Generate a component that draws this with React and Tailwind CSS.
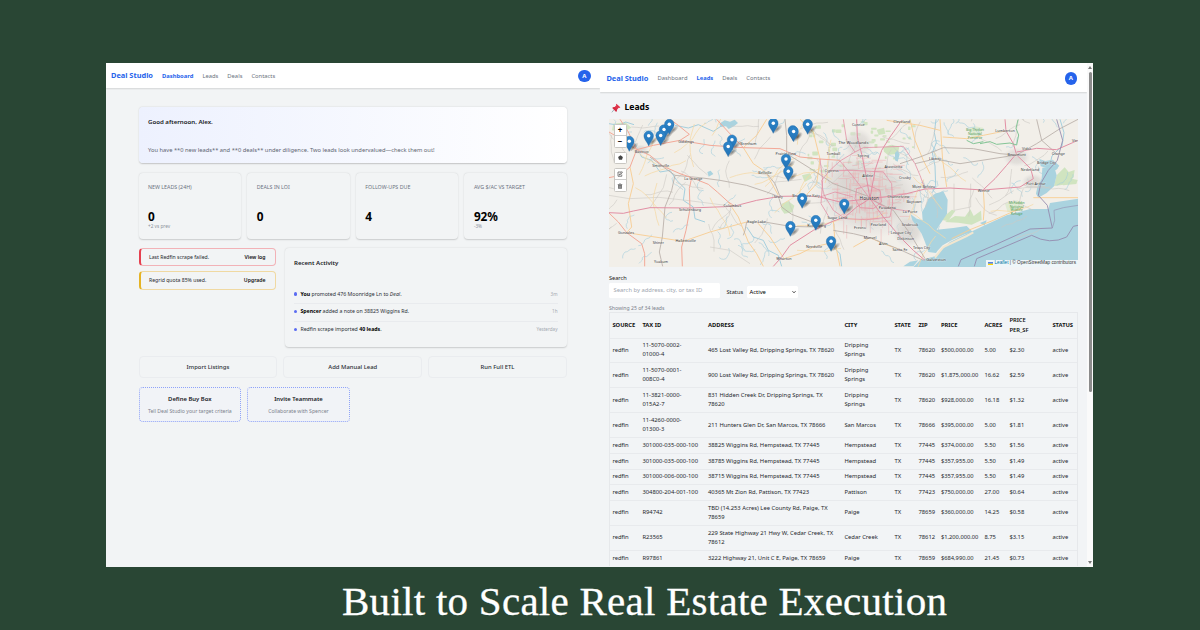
import React from 'react';

/* ---------- shared header ---------- */

function Header({ active, tall }) {
  const links = ['Dashboard', 'Leads', 'Deals', 'Contacts'];
  return (
    <header
      className={
        tall
          ? 'flex h-[28.5px] shrink-0 items-center bg-white pl-[6.4px] pr-[10px] pt-[2px] shadow-[0_1px_1.5px_rgba(0,0,0,0.13)]'
          : 'flex h-[25px] shrink-0 items-center bg-white pl-[5px] pr-[9.5px] pt-[1px] shadow-[0_1px_1.5px_rgba(0,0,0,0.13)]'
      }
    >
      <span className="w-[51px] text-[7.4px] font-bold text-[#2563eb]">Deal Studio</span>
      <nav className="flex gap-[9px] text-[5.82px] text-[#6b7280]">
        {links.map((l) => (
          <span key={l} className={l === active ? 'font-bold text-[#2563eb]' : ''}>
            {l}
          </span>
        ))}
      </nav>
      <span className="ml-auto flex size-[12.5px] items-center justify-center rounded-full bg-[#2563eb] text-[6px] font-bold text-white">
        A
      </span>
    </header>
  );
}

/* ---------- dashboard ---------- */

const stats = [
  ['NEW LEADS (24H)', '0', '+2 vs prev'],
  ['DEALS IN LOI', '0', ''],
  ['FOLLOW-UPS DUE', '4', ''],
  ['AVG $/AC VS TARGET', '92%', '-3%'],
];

function Alert({ text, action, className }) {
  return (
    <div
      className={`flex h-[18.5px] items-center justify-between rounded-[4px] border border-l-2 pl-[8.5px] pr-[9px] pt-[1px] text-[5.15px] text-[#26292e] ${className}`}
    >
      <span>{text}</span>
      <span className="font-semibold text-[#111]">{action}</span>
    </div>
  );
}

function Activity({ children, time, last }) {
  return (
    <li
      className={`flex h-[17.4px] items-center justify-between text-[5.22px] text-[#2b2f36] ${last ? '' : 'border-b border-[#e9ebee]'}`}
    >
      <span className="flex items-center gap-[3px]">
        <i className="mb-[2px] size-[3.4px] rounded-full bg-[#5b6cf2]" />
        <span>{children}</span>
      </span>
      <span className="mb-[2px] text-[4.6px] text-[#a3a8b0]">{time}</span>
    </li>
  );
}

function Dashboard() {
  return (
    <section className="flex w-[494px] flex-col bg-[#f2f4f5]">
      <Header active="Dashboard" />
      <main className="flex flex-col pl-[32.5px] pr-[33px] pt-[19.3px]">
        <div className="flex h-[56px] flex-col justify-between rounded-[4px] bg-gradient-to-r from-[#edf1fe] to-white px-[9.5px] pb-[8.5px] pt-[10px] shadow-[0_0.5px_1.5px_rgba(0,0,0,0.2)]">
          <h1 className="text-[6.1px] leading-[9px] font-semibold text-[#16181d]">Good afternoon, Alex.</h1>
          <p className="text-[5.75px] leading-[9px] text-[#5d6470]">
            You have **0 new leads** and **0 deals** under diligence. Two leads look undervalued—check them out!
          </p>
        </div>

        <div className="mt-[9.5px] grid grid-cols-4 gap-[6px]">
          {stats.map(([label, value, delta]) => (
            <div
              key={label}
              className="flex h-[66px] flex-col rounded-[4px] px-[9.5px] pt-[9.8px] shadow-[0_0.5px_1.5px_rgba(0,0,0,0.17)] bg-[#f2f4f5]"
            >
              <span className="text-[5.3px] leading-[8px] text-[#6b7280]">{label}</span>
              <span className="mt-[18.6px] text-[11.8px] leading-[14px] font-bold text-black">{value}</span>
              <span className="text-[4.7px] leading-[6px] text-[#8b919b]">{delta}</span>
            </div>
          ))}
        </div>

        <div className="mt-[9px] flex gap-[9px]">
          <div className="flex w-[137px] flex-col gap-[5px]">
            <Alert
              text="Last Redfin scrape failed."
              action="View log"
              className="border-[#f2b2b7] border-l-[#e5404f]"
            />
            <Alert
              text="Regrid quota 85% used."
              action="Upgrade"
              className="border-[#f0d9a2] border-l-[#e5b325]"
            />
          </div>
          <div className="flex h-[99px] flex-1 flex-col rounded-[4px] px-[9.5px] pt-[10px] shadow-[0_0.5px_1.5px_rgba(0,0,0,0.17)]">
            <h2 className="text-[6.1px] leading-[9px] font-semibold text-[#16181d]">Recent Activity</h2>
            <ul className="mt-[20px]">
              <Activity time="3m">
                <b className="text-black">You</b> promoted 476 Moonridge Ln to <i>Deal</i>.
              </Activity>
              <Activity time="1h">
                <b className="text-black">Spencer</b> added a note on 38825 Wiggins Rd.
              </Activity>
              <Activity time="Yesterday" last>
                Redfin scrape imported <b className="text-black">40 leads</b>.
              </Activity>
            </ul>
          </div>
        </div>

        <div className="mt-[9px] grid grid-cols-3 gap-[6px]">
          {['Import Listings', 'Add Manual Lead', 'Run Full ETL'].map((t) => (
            <div
              key={t}
              className="flex h-[22.5px] items-center justify-center rounded-[4px] border border-[#eaecef] pt-[1px] text-[5.9px] font-medium text-[#2b2f36]"
            >
              {t}
            </div>
          ))}
        </div>

        <div className="mt-[9px] grid grid-cols-4 gap-[6px]">
          {[
            ['Define Buy Box', 'Tell Deal Studio your target criteria'],
            ['Invite Teammate', 'Collaborate with Spencer'],
          ].map(([a, b]) => (
            <div
              key={a}
              className="flex h-[34.5px] flex-col items-center justify-center gap-[3px] rounded-[4px] border border-dotted border-[#8fa3f8] bg-[#f1f3f7] pt-[1px] whitespace-nowrap"
            >
              <span className="text-[5.9px] leading-[9px] font-semibold text-[#16181d]">{a}</span>
              <span className="text-[5.15px] leading-[8px] text-[#7c828d]">{b}</span>
            </div>
          ))}
        </div>
      </main>
    </section>
  );
}

/* ---------- map ---------- */

function seeded(seed) {
  let s = seed;
  return () => {
    s = (s * 16807) % 2147483647;
    return s / 2147483647;
  };
}

function wander(rand, x, y, steps, len, drift) {
  let a = rand() * Math.PI * 2;
  let d = `M${x.toFixed(0)} ${y.toFixed(0)}`;
  for (let i = 0; i < steps; i++) {
    a += (rand() - 0.5) * drift;
    x += Math.cos(a) * len;
    y += Math.sin(a) * len;
    d += `L${x.toFixed(0)} ${y.toFixed(0)}`;
  }
  return d;
}

const r1 = seeded(77);
const lanes = Array.from({ length: 75 }, () =>
  wander(r1, 27 + r1() * 1300, 177 + r1() * 330, 5, 17, 0.8)
);
const yellowLanes = Array.from({ length: 26 }, () =>
  wander(r1, 27 + r1() * 1150, 177 + r1() * 400, 6, 22, 0.6)
);
const streams = Array.from({ length: 90 }, () =>
  wander(r1, 27 + r1() * 1000, 177 + r1() * 430, 8, 7, 1.9)
);
const eastStreams = Array.from({ length: 24 }, () =>
  wander(r1, 1000 + r1() * 420, 185 + r1() * 190, 8, 7, 1.9)
);
const streets = Array.from({ length: 150 }, () => {
  const x = 680 + (r1() + r1()) * 120;
  const y = 275 + (r1() + r1()) * 120;
  const l = 14 + r1() * 34;
  return r1() > 0.5 ? `M${x} ${y}h${l}` : `M${x} ${y}v${l}`;
});
const woods = Array.from({ length: 60 }, () => {
  const x = 610 + r1() * 340;
  const y = 182 + r1() * 150;
  return [x, y, 5 + r1() * 12, 4 + r1() * 8];
});

const primary = [
  'M60 177L85 215 110 268 160 255 240 240 268 222 235 195 210 177',
  'M240 240L330 255 430 262 540 265 600 290 660 296 720 300',
  'M110 268L150 285 190 318 240 340 275 352 325 372 352 395 385 425 402 436',
  'M275 352L268 385 270 445 258 510 245 560 247 618',
  'M27 458L55 485 80 517 125 550 134 580 134 618',
  'M430 262L385 215 350 177',
  'M27 215L70 240 110 268 90 320 60 345 27 352',
];

const secondary = [
  'M80 517L165 530 250 543 330 515 440 485',
  'M385 425L415 470 445 545 470 580 490 618',
  'M90 320L100 370 85 430 95 500 80 517',
  'M500 177L470 225 430 262 460 310 497 335 535 405',
  'M600 177L640 215 660 296 650 370 618 405',
  'M470 484L510 530 552 595 600 580 640 560 705 545',
  'M930 177L945 240 970 300 990 340',
  'M1020 177L1028 300 1040 380',
  'M1028 230L1100 235 1150 225 1215 212',
  'M860 180L960 195 1020 210',
  'M1150 388L1153 440 1150 480M1300 412L1434 412',
  'M1055 535L1110 508 1180 480 1270 440',
  'M700 480L705 545 720 618M760 560L810 532 850 550 900 568',
];

const trunk = [
  'M150 290L190 320 225 345 215 390 195 440 187 530 178 575 188 618',
  'M225 345L300 352 360 360 440 375 500 395 535 408 545 440 575 462 650 490',
  'M440 485L500 486 570 498 640 500',
  'M440 485L435 510 430 525M497 335L525 370 540 408',
  'M555 177L560 225 560 280 640 330 700 370 810 410',
  'M900 310L960 290 1030 262 1120 265 1200 280 1250 284',
  'M1250 284L1310 250 1380 205 1434 177',
  'M1310 177L1325 240 1370 280',
  'M810 415L880 450 930 520 975 595',
  'M945 310L1005 296 1080 310 1250 284',
  'M700 510L760 520 810 532 900 568 970 600',
];

const freeways = [
  'M27 457L70 459 100 452 150 442 270 443 400 438 470 420 540 408 618 407 660 410 720 425 810 415 870 408 920 400 975 386 1050 383 1150 389 1260 380 1300 355 1292 325 1250 284',
  'M1150 388L1185 355 1220 315 1245 285',
  'M1250 284L1240 250 1218 212 1215 177',
  'M1250 275L1310 264 1370 268 1434 240',
  'M770 177L772 230 786 285 798 345 810 415 850 470 905 535 940 570 975 600',
  'M905 180L870 230 845 270 825 330 810 415 770 440 735 470 700 482 640 510 570 555 545 590 520 618',
];

const loops = [
  'M690 330L760 330 850 335 875 370 878 430 870 470 800 478 735 475 700 450 670 400 665 360 690 330',
  'M770 385L805 375 840 390 845 425 820 445 780 442 765 415Z',
  'M690 330L720 302 765 275 790 262 910 258 945 310 960 345 975 386',
  'M660 410L705 395 760 410M810 415L760 350 720 302M810 415L860 443 930 453',
  'M660 296L668 360 663 430 690 475M730 177L740 240 765 275',
];

const labels = [
  ['Bastrop', 125, 274], ['Giddings', 258, 245], ['Brenham', 445, 251], ['Smithville', 182, 317],
  ['La Grange', 280, 355], ['Schulenburg', 270, 448], ['Columbus', 397, 437], ['Bellville', 495, 337],
  ['Eagle Lake', 470, 484], ['Gonzales', 78, 517], ['Shiner', 175, 547], ['Hallettsville', 257, 542],
  ['Yoakum', 183, 604], ['Wharton', 552, 595], ['Needville', 642, 560], ['Sealy', 535, 408],
  ['Brookshire Katy', 618, 405], ['Rosenberg', 650, 497], ['Sugar Land', 712, 472], ['Prairie View', 557, 280],
  ['Conroe', 775, 192], ['Cleveland', 905, 183], ['Spring', 790, 286],
  ['Tomball', 700, 279], ['Cypress', 695, 331], ['Atascocita', 880, 318], ['Crosby', 915, 353],
  ['Liberty', 1005, 294], ['Lumberton', 1215, 212], ['Beaumont', 1250, 284], ['Vidor', 1280, 266],
  ['Orange', 1375, 281], ['Bridge City', 1340, 306], ['Nederland', 1290, 328], ['Port Arthur', 1308, 370],
  ['Winnie', 1151, 391], ['Mont Belvieu', 971, 380], ['Baytown', 942, 424], ['Channelview', 895, 409],
  ['Pasadena', 862, 443], ['La Porte', 930, 453], ['Seabrook', 930, 494], ['Pearland', 835, 494],
  ['League City', 903, 516], ['Dickinson', 917, 535], ['Texas City', 965, 561], ['Alvin', 850, 550],
  ['Manvel', 810, 532], ['Santa Fe', 900, 568], ['Fresno', 780, 503], ['Aldine', 803, 346], ['Vin', 1424, 241],
];

const pins = [
  [664, 139], [669.3, 133.7], [629.3, 150.7], [648.7, 145.3], [660.7, 145], [732, 149.3], [728.2, 156],
  [773.3, 132.7], [792.8, 139.9], [793.6, 141], [807.7, 133.7], [786, 168.5], [788.3, 180.7],
  [802.2, 207.7], [844.3, 213.3], [815.8, 229.7], [790.4, 235.7], [831.1, 250.7],
];

function LeadsMap() {
  return (
    <div className="relative h-[147.5px] w-[469px] shrink-0 overflow-hidden">
      <svg viewBox="27 176 1407 442.5" width="469" height="147.5" className="block" fill="none">
        <defs>
          <radialGradient id="city">
            <stop offset="0" stopColor="#d0ccc9" />
            <stop offset="0.6" stopColor="#dad7d3" stopOpacity="0.9" />
            <stop offset="1" stopColor="#e0dfdf" stopOpacity="0" />
          </radialGradient>
          <linearGradient id="pinfill" x1="0" y1="0" x2="0" y2="1">
            <stop offset="0" stopColor="#2e86cb" />
            <stop offset="1" stopColor="#2272b4" />
          </linearGradient>
          <radialGradient id="pinshade">
            <stop offset="0" stopColor="#000" stopOpacity="0.45" />
            <stop offset="1" stopColor="#000" stopOpacity="0" />
          </radialGradient>
        </defs>
        <rect x="27" y="170" width="1407" height="450" fill="#f2efe9" />
        <g fill="#c8e2b6" opacity="0.8">
          {woods.map(([x, y, w, h], i) => (
            <rect key={i} x={x} y={y} width={w} height={h} rx="2" />
          ))}
          <path d="M830 208l22-6 4 18-20 4zM850 262l20-8 28 4-4 22-30 4-12-10zM545 430l20-8 18 14-6 20-24 4-10-14zM606 345l24-6 6 14-22 12zM40 190l36-4 18 16-26 14-32-6z" />
          <path d="M1035 485l30-18 30 2 16-22 10 20 22-16 2 28-30 14-40-6zM1370 345l24-24 12 14 18-6-4 24-30 20-28 4z" />
          <path d="M1020 478l36-30 10 4-22 30zM1385 365l30-10 18 4-4 12-40 4z" />
        </g>
        <path d="M1215 430l36-10 20 8-14 24-34 4zM1105 206l20-8 24 4-8 28-26 4z" fill="#d3e8c4" opacity="0.6" />
        <g stroke="#a5cfde" strokeWidth="2.2" opacity="0.8">
          {streams.concat(eastStreams).map((d, i) => <path key={i} d={d} />)}
        </g>
        <g stroke="#a5cfde" strokeWidth="3">
          <path d="M75 235l30 15 20 40 30 10 25 35 30-5 20 30 25 25-5 35 30 20 5 35 30 10M27 190l30 5 20-10 25 8M440 500l20 30 30 10 15 30 30 15 10 33M1008 177l-5 40 6 30-12 30 8 40 2 60-10 20M1380 177l12 40-6 40-30 30-10 40M700 560l20 20 5 38" />
          <path d="M225 195l40 8 30-10 45 20 30-20" />
        </g>
        <ellipse cx="810" cy="410" rx="165" ry="125" fill="url(#city)" opacity="0.85" />
        <ellipse cx="740" cy="350" rx="90" ry="80" fill="url(#city)" opacity="0.5" />
        <ellipse cx="925" cy="510" rx="50" ry="50" fill="url(#city)" opacity="0.8" />
        <ellipse cx="1250" cy="290" rx="42" ry="30" fill="url(#city)" opacity="0.7" />
        <ellipse cx="1300" cy="365" rx="36" ry="26" fill="url(#city)" opacity="0.7" />
        <ellipse cx="775" cy="250" rx="46" ry="46" fill="url(#city)" opacity="0.7" />
        <ellipse cx="120" cy="268" rx="26" ry="16" fill="url(#city)" opacity="0.7" />
        <g fill="#aad3df">
          <path d="M1434 415L1350 428 1345 446 1290 446 1220 465 1150 497 1100 520 1050 545 1022 572 1005 588 960 600 940 620H1434Z" />
          <path d="M985 415L1005 400 1030 393 1043 418 1041 460 1020 492 1010 508 1060 503 1100 497 1118 515 1095 522 1055 540 1028 555 1012 572 1008 578 985 575 975 545 965 520 955 505 937 480 932 462 950 475 968 480 966 455 975 440Z" />
          <path d="M1327 322L1362 318 1370 345 1362 378 1340 398 1315 412 1308 400 1312 380 1325 355Z" />
          <path d="M358 190l16-10 16 4 14-6 10 10-12 10-16 8-8-8-16 2z" />
          <path d="M1318 296l18 6 22-4 20 18-10 14-24-6-22-6zM322 335l10-4 8 10-14 8zM885 278l8-8 6 12-6 22-8-4z" />
          <path d="M955 600l-15 18h-30l20-14zM1140 488l20-8-6 16z" />
        </g>
        <path d="M1005 592L1030 560 1100 527 1120 516" stroke="#f2e6cf" strokeWidth="6" />
        <g stroke="#cdc9c5" strokeWidth="1.8">
          {lanes.map((d, i) => <path key={i} d={d} />)}
          <path d="M27 405l60 10 90-4 90 10 110 14M150 442l40-60 10-40M330 560l60 10 60 40M1062 370v80l50-10v-70M1300 450l-60-30" />
        </g>
        <g stroke="#f6d9a4" strokeWidth="2.2">
          {yellowLanes.map((d, i) => <path key={i} d={d} />)}
        </g>
        <g stroke="#f1a3a8" strokeWidth="1.7" opacity="0.7">
          {streets.map((d, i) => <path key={i} d={d} />)}
        </g>
        <g stroke="#f7cd95" strokeWidth="2.8">
          {secondary.map((d, i) => <path key={i} d={d} />)}
        </g>
        <g stroke="#b8aea8" strokeWidth="2.8" opacity="0.9">
          {trunk.map((d, i) => <path key={i} d={d} />)}
        </g>
        <g stroke="#f3a998" strokeWidth="3">
          {primary.map((d, i) => <path key={i} d={d} />)}
        </g>
        <g stroke="#e28fa4" strokeLinejoin="round">
          <g strokeWidth="2.3">
            {loops.map((d, i) => <path key={i} d={d} />)}
          </g>
          <g strokeWidth="3">
            {freeways.map((d, i) => <path key={i} d={d} />)}
          </g>
        </g>
        <path
          d="M1140 250l30-6 20 8 40-4 20 6 6-30-8-20 6-26M1100 240l20 10 30-6"
          stroke="#84c596"
          strokeWidth="3"
        />
        <g stroke="#9489ae" strokeWidth="3" opacity="0.85">
          <path d="M1075 618L1083 598 1180 556 1290 506 1357 503 1342 435 1315 405 1322 370 1345 330 1372 300 1388 240 1370 177" />
          <path d="M1123 618L1130 595 1295 525Q1350 555 1400 530L1420 498 1434 495" />
          <path d="M1357 503L1364 480 1362 450 1390 442 1434 435" strokeWidth="2" />
        </g>
        <g fill="#333" fontSize="11.2" textAnchor="middle" stroke="#fff" strokeOpacity="0.5" strokeWidth="2" paintOrder="stroke">
          {labels.map(([t, x, y]) => (
            <text key={t} x={x} y={y + 4}>{t}</text>
          ))}
          <text x="760" y="252" fontSize="12.5">The Woodlands</text>
          <text x="808" y="420" fontSize="14.5">Houston</text>
          <text x="1008" y="601" fontSize="12.5">Galveston</text>
        </g>
        <g fill="#4d9a52" fontSize="10.5" textAnchor="middle">
          <text x="1125" y="212">Big Thicket</text>
          <text x="1125" y="223">National</text>
          <text x="1125" y="235">Preserve</text>
          <text x="1250" y="431">McFaddin</text>
          <text x="1250" y="442">National</text>
          <text x="1250" y="453">Wildlife</text>
          <text x="1250" y="464">Refuge</text>
        </g>
        {pins.map(([px, py], i) => (
          <g key={i} transform={`translate(${(px - 600) * 3} ${(py - 60) * 3 + 1})`}>
            <ellipse cx="12" cy="-13" rx="20" ry="8" transform="rotate(-40 12 -13)" fill="url(#pinshade)" />
            <path
              d="M0 0C-3 -10 -14.500 -19 -14.500 -30.500A14.500 14.500 0 0 1 14.500 -30.500C14.500 -19 3 -10 0 0Z"
              fill="url(#pinfill)"
              stroke="#2468a0"
              strokeWidth="1"
            />
            <circle cx="0" cy="-30.500" r="5.200" fill="#fff" />
          </g>
        ))}
      </svg>

      <div className="absolute left-[4.5px] top-[4.5px] flex flex-col gap-[4px]">
        <div className="flex w-[13px] flex-col rounded-[1.5px] border border-[#c9c7c2] bg-white">
          <span className="flex h-[11px] items-center justify-center border-b border-[#ccc] text-[8px] leading-none font-bold text-black">+</span>
          <span className="flex h-[11px] items-center justify-center text-[8px] leading-none font-bold text-black">−</span>
        </div>
        <div className="flex h-[12.5px] w-[13px] items-center justify-center rounded-[1.5px] border border-[#c9c7c2] bg-white">
          <svg viewBox="0 0 10 10" width="5" height="5">
            <path d="M5 .5L9.700 4 8 9.300H2L.3 4Z" fill="#444" />
          </svg>
        </div>
        <div className="flex w-[13px] flex-col rounded-[1.5px] border border-[#c9c7c2] bg-white">
          <span className="flex h-[11px] items-center justify-center border-b border-[#ccc]">
            <svg viewBox="0 0 12 12" width="6" height="6" fill="none" stroke="#555" strokeWidth="1.500">
              <path d="M8 2H2V10.500H9.500V7M4.500 8L5 6 10 1.200 11.200 2.500 6.500 7.500Z" />
            </svg>
          </span>
          <span className="flex h-[11px] items-center justify-center">
            <svg viewBox="0 0 12 12" width="6" height="6" fill="#666">
              <path d="M1.500 2H4.500V.8H7.500V2H10.500V3.500H1.500ZM2.200 4.200H9.800V11.500H2.200Z" />
              <path d="M4.500 5.200V10.500M6 5.200V10.500M7.500 5.200V10.500" stroke="#ddd" strokeWidth=".6" />
            </svg>
          </span>
        </div>
      </div>

      <div className="absolute right-0 bottom-0 flex h-[6.5px] items-center gap-[1px] bg-white/80 pl-[2px] pr-[2px] text-[4.7px] leading-none whitespace-nowrap text-[#333]">
        <svg viewBox="0 0 12 8" width="5" height="3.5">
          <path fill="#4c7be1" d="M0 0h12v4H0z" />
          <path fill="#ffd500" d="M0 4h12v4H0z" />
        </svg>
        <span className="font-['Liberation_Sans',Arial,sans-serif]">
          <span className="text-[#0078a8]">Leaflet</span> | © OpenStreetMap contributors
        </span>
      </div>
    </div>
  );
}

/* ---------- leads ---------- */

const heads = ['SOURCE', 'TAX ID', 'ADDRESS', 'CITY', 'STATE', 'ZIP', 'PRICE', 'ACRES', 'PRICE PER_SF', 'STATUS'];

const rows = [
  ['11-5070-0002-\n01000-4', '465 Lost Valley Rd, Dripping Springs, TX 78620', 'Dripping\nSprings', '78620', '$500,000.00', '5.00', '$2.30'],
  ['11-5070-0001-\n008C0-4', '900 Lost Valley Rd, Dripping Springs, TX 78620', 'Dripping\nSprings', '78620', '$1,875,000.00', '16.62', '$2.59'],
  ['11-3821-0000-\n015A2-7', '831 Hidden Creek Dr, Dripping Springs, TX\n78620', 'Dripping\nSprings', '78620', '$928,000.00', '16.18', '$1.32'],
  ['11-4260-0000-\n01300-3', '211 Hunters Glen Dr, San Marcos, TX 78666', 'San Marcos', '78666', '$395,000.00', '5.00', '$1.81'],
  ['301000-035-000-100', '38825 Wiggins Rd, Hempstead, TX 77445', 'Hempstead', '77445', '$374,000.00', '5.50', '$1.56'],
  ['301000-035-000-100', '38785 Wiggins Rd, Hempstead, TX 77445', 'Hempstead', '77445', '$357,955.00', '5.50', '$1.49'],
  ['301000-006-000-100', '38715 Wiggins Rd, Hempstead, TX 77445', 'Hempstead', '77445', '$357,955.00', '5.50', '$1.49'],
  ['304800-204-001-100', '40365 Mt Zion Rd, Pattison, TX 77423', 'Pattison', '77423', '$750,000.00', '27.00', '$0.64'],
  ['R94742', 'TBD (14.253 Acres) Lee County Rd, Paige, TX\n78659', 'Paige', '78659', '$360,000.00', '14.25', '$0.58'],
  ['R23565', '229 State Highway 21 Hwy W, Cedar Creek, TX\n78612', 'Cedar Creek', '78612', '$1,200,000.00', '8.75', '$3.15'],
  ['R97861', '3222 Highway 21, Unit C E, Paige, TX 78659', 'Paige', '78659', '$684,990.00', '21.45', '$0.73'],
];

const cols =
  'grid grid-cols-[30px_65.5px_136.5px_50px_24px_22.5px_43.5px_25px_43px_25px] items-center pl-[2.4px] leading-[9.2px] whitespace-pre';

function PushPin() {
  return (
    <svg viewBox="0 0 30 30" width="10" height="10">
      <path d="M10 19L2.500 28" stroke="#9aa7b0" strokeWidth="2.500" />
      <path d="M16 2L28 13 25 15 23 14.500 18 20 17.500 25 15 26 4 15 6 12.500 11 12 16 7 15 4.500Z" fill="#e0334a" />
      <path d="M11 12L18 20 17.500 25 15 26 4 15 6 12.500Z" fill="#be1931" opacity=".35" />
    </svg>
  );
}

function Leads() {
  return (
    <section className="flex w-[487px] flex-col overflow-hidden bg-[#f2f4f6]">
      <Header active="Leads" tall />
      <main className="flex flex-col pl-[9px] pr-[9.5px]">
        <h1 className="flex h-[27.5px] items-center gap-[4px] pl-[1.5px] pt-[4.5px] text-[8.6px] font-bold text-black">
          <PushPin />
          Leads
        </h1>
        <LeadsMap />
        <div className="mt-[7px] flex items-end">
          <label className="flex flex-col text-[5.6px] leading-[9px] text-[#222]">
            Search
            <span className="mt-[0.5px] flex h-[14.5px] w-[111px] items-center rounded-[1.5px] bg-white pl-[4.5px] text-[5.85px] text-[#a0a6b0]">
              Search by address, city, or tax ID
            </span>
          </label>
          <span className="mb-[0.5px] ml-[6.5px] w-[20.5px] text-[5.7px] leading-[9px] text-[#222]">Status</span>
          <span className="flex h-[11.5px] w-[50.5px] items-center justify-between rounded-[1.5px] bg-white pl-[2.5px] pr-[2px] pt-[0.5px] text-[5.85px] text-black">
            Active
            <svg viewBox="0 0 8 8" width="4" height="4" fill="none" stroke="#222" strokeWidth="1.800">
              <path d="M1 2.500L4 5.500 7 2.500" />
            </svg>
          </span>
        </div>
        <p className="mt-[6.5px] h-[7.5px] text-[5.15px] leading-[9px] text-[#7a808a]">Showing 25 of 34 leads</p>
        <div className="border border-b-0 border-[#e6e8eb] text-[5.83px] text-[#24272c]">
          <div className={`${cols} h-[25px] pt-[1px] text-[5.8px] font-bold text-[#111]`}>
            {heads.map((h) => (
              <span key={h} className={h === 'PRICE PER_SF' ? 'w-[26px] whitespace-normal font-semibold' : ''}>
                {h}
              </span>
            ))}
          </div>
          {rows.map(([tax, addr, city, zip, price, acres, ppsf], i) => (
            <div
              key={i}
              className={`${cols} border-t border-[#e8eaed] ${
                /\n/.test(tax + addr + city) ? 'h-[24.95px]' : 'h-[15.7px]'
              }`}
            >
              <span>redfin</span>
              <span>{tax}</span>
              <span>{addr}</span>
              <span>{city}</span>
              <span>TX</span>
              <span>{zip}</span>
              <span className="text-[5.75px]">{price}</span>
              <span>{acres}</span>
              <span>{ppsf}</span>
              <span>active</span>
            </div>
          ))}
        </div>
      </main>
    </section>
  );
}

function Scrollbar() {
  return (
    <div className="flex w-[6px] flex-col items-center justify-between bg-[#fafafa] py-[3px]">
      <svg viewBox="0 0 8 6" width="4" height="3"><path d="M4 0L8 6H0Z" fill="#777" /></svg>
      <div className="mt-[3px] h-[320px] w-[3px] rounded-full bg-[#8b8b8b]" />
      <div className="flex-1" />
      <svg viewBox="0 0 8 6" width="4" height="3"><path d="M4 6L8 0H0Z" fill="#777" /></svg>
    </div>
  );
}

export default function App() {
  return (
    <div className="flex h-[630px] w-[1200px] flex-col overflow-hidden bg-[#294634] pt-[63px] font-['Noto_Sans','Open_Sans',sans-serif]">
      <div className="ml-[106px] flex h-[504px] w-[987px] shrink-0 overflow-hidden">
        <Dashboard />
        <Leads />
        <Scrollbar />
      </div>
      <p className="ml-[342px] mt-[9px] font-['Liberation_Serif','Times_New_Roman',serif] text-[41px] leading-[50px] tracking-[0.27px] whitespace-nowrap text-white [-webkit-text-stroke:0.3px_white]">
        Built to Scale Real Estate Execution
      </p>
    </div>
  );
}
